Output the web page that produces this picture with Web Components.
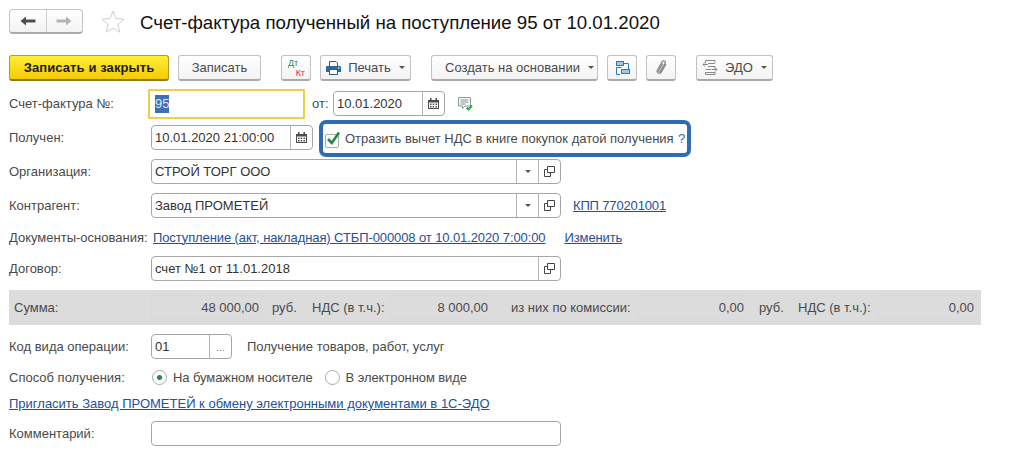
<!DOCTYPE html>
<html lang="ru"><head><meta charset="utf-8"><title>Счет-фактура</title>
<style>
html,body{margin:0;background:#fff}
body{width:1024px;height:474px;overflow:hidden;font:13px "Liberation Sans",Arial,sans-serif;color:#4a4a4a}
</style></head><body>
<doc-page>
  <title-bar slot="head" title-text="Счет-фактура полученный на поступление 95 от 10.01.2020"></title-bar>
  <tool-bar slot="head">
    <tool-btn primary w="160">Записать и закрыть</tool-btn>
    <tool-btn w="83" style="margin-left:9px">Записать</tool-btn>
    <tool-btn w="30" style="margin-left:20px"><dt-kt></dt-kt></tool-btn>
    <tool-btn w="91" style="margin-left:9px" icon="print" menu>Печать</tool-btn>
    <tool-btn w="167" style="margin-left:20px" pad="10" menu>Создать на основании</tool-btn>
    <tool-btn w="30" style="margin-left:9px" icon="struct"></tool-btn>
    <tool-btn w="30" style="margin-left:9px" icon="clip"></tool-btn>
    <tool-btn w="77" style="margin-left:20px" icon="edo" menu>ЭДО</tool-btn>
  </tool-bar>
  <form-row label="Счет-фактура №:">
    <text-field w="157" focused value="95" style="margin-left:-3px"></text-field>
    <plain-text w="28" pad="7">от:</plain-text>
    <text-field w="112" value="10.01.2020" btns="cal"></text-field>
    <note-icon style="margin-left:13px"></note-icon>
  </form-row>
  <form-row label="Получен:">
    <text-field w="162" value="10.01.2020 21:00:00" btns="cal"></text-field>
    <check-opt style="margin-left:6px">Отразить вычет НДС в книге покупок датой получения</check-opt>
  </form-row>
  <form-row label="Организация:">
    <text-field w="410" value="СТРОЙ ТОРГ ООО" btns="drop open"></text-field>
  </form-row>
  <form-row label="Контрагент:">
    <text-field w="410" value="Завод ПРОМЕТЕЙ" btns="drop open"></text-field>
    <link-text style="margin-left:12px;letter-spacing:-.15px">КПП 770201001</link-text>
  </form-row>
  <form-row label="Документы-основания:" h="20">
    <link-text style="margin-left:2px;letter-spacing:-.1px">Поступление (акт, накладная) СТБП-000008 от 10.01.2020 7:00:00</link-text>
    <link-text style="margin-left:19px;letter-spacing:-.1px">Изменить</link-text>
  </form-row>
  <form-row label="Договор:">
    <text-field w="410" value="счет №1 от 11.01.2018" btns="open"></text-field>
  </form-row>
  <total-band>
    <plain-text w="142" pad="5">Сумма:</plain-text>
    <amount-box w="111">48 000,00</amount-box>
    <plain-text w="50" pad="10">руб.</plain-text>
    <plain-text w="78">НДС (в т.ч.):</plain-text>
    <amount-box w="101">8 000,00</amount-box>
    <plain-text w="146" pad="20">из них по комиссии:</plain-text>
    <amount-box w="110">0,00</amount-box>
    <plain-text w="51" pad="12">руб.</plain-text>
    <plain-text w="79">НДС (в т.ч.):</plain-text>
    <amount-box w="100">0,00</amount-box>
  </total-band>
  <form-row label="Код вида операции:">
    <text-field w="81" value="01" btns="dots"></text-field>
    <plain-text pad="15">Получение товаров, работ, услуг</plain-text>
  </form-row>
  <form-row label="Способ получения:" h="18">
    <radio-opt checked>На бумажном носителе</radio-opt>
    <radio-opt style="margin-left:11px">В электронном виде</radio-opt>
  </form-row>
  <form-row h="17" nolabel>
    <link-text>Пригласить Завод ПРОМЕТЕЙ к обмену электронными документами в 1С-ЭДО</link-text>
  </form-row>
  <form-row label="Комментарий:">
    <text-field w="410" value=""></text-field>
  </form-row>
</doc-page>
<script>
const FONT='"Liberation Sans",Arial,sans-serif';
const ICONS={
 print:'<svg width="15" height="14" viewBox="0 0 15 14"><path d="M3.500.5h6.500l1.500 1.500v3.500h-8z" fill="#fff" stroke="#2a5f8c"/><path d="M1 5h13a1 1 0 0 1 1 1v5h-15V6a1 1 0 0 1 1-1z" fill="#2f6a98"/><rect x="3.500" y="8.500" width="8" height="5" fill="#fff" stroke="#2a5f8c"/><rect x="12" y="6.300" width="1.600" height="1.400" fill="#cfe2f0"/></svg>',
 struct:'<svg width="15" height="16" viewBox="0 0 15 16" fill="none" stroke="#2b7ab5"><rect x="1.500" y="1.500" width="7" height="4" fill="#9fcbe8"/><rect x="6.500" y="9.500" width="8" height="4" fill="#9fcbe8"/><path d="M8.500 3.500h5V9M6.500 7.500h-5v7H5"/></svg>',
 clip:'<svg width="15" height="15" viewBox="0 0 16 16" fill="none" stroke="#8a8a8a" stroke-width="1.400"><g transform="rotate(-14 8 8)"><path d="M13.500 5.500 6.800 12.600c-1.100 1.200-2.700 1.200-3.600.3s-.9-2.400.2-3.600l6.700-7c.8-.8 1.900-.8 2.600-.1s.7 1.800-.1 2.600L6 11.600c-.5.500-1.100.5-1.500.2s-.4-1 .1-1.500l5.600-5.900"/></g></svg>',
 edo:'<svg width="16" height="15" viewBox="0 0 16 15" fill="none" stroke="#8a8a8a"><path d="M3.500.5h9.500v2M3.500.5v2.500M6 3.500h7M6 6.500h7M3.500 9.500h6M3.500 12.500h9.500M3.500 12v2.500h9.500V12M13 6.500v2"/><path d="M6 4.500H1M3 2.500 1 4.500l2 2M10 9.500h5M13 7.500l2 2-2 2"/></svg>'
};
function def(name,css,build){
 customElements.define(name,class extends HTMLElement{
  connectedCallback(){
   if(this.shadowRoot)return;
   const r=this.attachShadow({mode:'open'});
   r.innerHTML='<style>'+css+'</style>'+build(this);
  }
 });
}
const a=(e,n,d='')=>e.hasAttribute(n)?e.getAttribute(n):d;
const W=e=>{if(e.hasAttribute('w'))e.style.width=a(e,'w')+'px';};

def('doc-page',`:host{display:block;font:13px ${FONT};color:#4a4a4a;box-sizing:border-box;height:474px;padding:9px 0 0 9px}
 .head{display:block;height:82px}
 .body{display:flex;flex-direction:column;gap:9px;width:972px}
 `,()=>'<div class="head"><slot name="head"></slot></div><div class="body"><slot></slot></div>');

def('title-bar',`:host{display:flex;align-items:center;height:25px}
 .nav{display:flex;width:74px;height:25px;box-sizing:border-box;border:1px solid #c4c4c4;border-bottom:2px solid #aaa;border-radius:4px;background:linear-gradient(#fff,#f2f2f2)}
 .nav span{flex:1;display:flex;align-items:center;justify-content:center}
 .nav span+span{border-left:1px solid #d0d0d0}
 .star{margin-left:18px;display:flex}
 h1{margin:2px 0 0 15px;font:400 18.67px ${FONT};color:#111;white-space:nowrap;letter-spacing:0}`,
 e=>`<div class="nav"><span><svg width="16" height="10" viewBox="0 0 16 10"><path d="M0.500 5 6 .5V3.500H15.500V6.500H6V9.500z" fill="#4e4e4e"/></svg></span><span><svg width="16" height="10" viewBox="0 0 16 10"><path d="M15.500 5 10 .5V3.500H.5V6.500H10V9.500z" fill="#b4b4b4"/></svg></span></div>
 <span class="star"><svg width="24" height="23" viewBox="0 0 24 23"><path d="M12 1l3 7.600 8 .6-6.100 5.200 1.900 7.800L12 18l-6.800 4.200 1.900-7.800L1 9.200l8-.6z" fill="#fff" stroke="#cfcfcf"/></svg></span><h1>${a(e,'title-text')}</h1>`);

def('tool-bar',`:host{display:flex;align-items:center;height:26px;margin-top:21px}`,()=>'<slot></slot>');

def('tool-btn',`:host{display:inline-flex;height:26px;flex:none}
 .b{flex:1;display:flex;align-items:center;justify-content:center;gap:7px;box-sizing:border-box;border:1px solid #c2c2c2;border-bottom:2px solid #a9a9a9;border-radius:3px;background:linear-gradient(#fff,#f3f3f3);color:#4a4a4a;white-space:nowrap;font:13px ${FONT}}
 :host([primary]) .b{background:linear-gradient(#ffee3a,#f6cb00);border-color:#b39a2a #b39a2a #8d7a20;color:#1d1d1d;font-weight:700;letter-spacing:.1px}
 .m{width:0;height:0;border:3px solid transparent;border-top:3px solid #555;border-bottom:0;margin-left:1px}
 svg{display:block}`,
 e=>{W(e);const p=a(e,'pad');return `<div class="b" part="b"${p?` style="padding-left:${p}px"`:''}>${ICONS[a(e,'icon')]||''}<slot></slot>${e.hasAttribute('menu')?'<i class="m"></i>':''}</div>`;});
 
def('dt-kt',`:host{display:block;width:16px;height:20px;position:relative;font:400 9px ${FONT}}
 span{line-height:10px;height:10px;overflow:hidden;display:block;position:absolute}
 .d{left:0;top:0;color:#23904f}.k{right:-1px;top:10px;color:#d8303f}`,
 ()=>'<span class="d">Дт</span><span class="k">Кт</span>');

def('form-row',`:host{display:flex;align-items:center;height:25px;flex:none}
 .l{width:142px;flex:none;white-space:nowrap;color:#4a4a4a}`,
 e=>{ if(e.hasAttribute('h'))e.style.height=a(e,'h')+'px';
   return (e.hasAttribute('nolabel')?'':`<span class="l">${a(e,'label')}</span>`)+'<slot></slot>';});

def('text-field',`:host{display:flex;flex:none;height:25px;box-sizing:border-box;border:1px solid #a6a6a6;border-radius:4px;background:#fff;color:#333;font:13px ${FONT}}
 :host([focused]){height:30px;border:2px solid #f1cf43;border-radius:1px}
 .v{flex:1;min-width:0;padding-left:3px;display:flex;align-items:center;white-space:nowrap}
 :host([focused]) .v{padding-left:5px}
 :host([focused]) .v span{background:#3f6fb5;color:#dfe7f5;line-height:18px}
 .s{flex:none;width:21px;border-left:1px solid #b4b4b4;display:flex;align-items:center;justify-content:center;color:#777}
 .c{width:20px}`,
 e=>{W(e);const ic={
   cal:'<svg width="11" height="11" viewBox="0 0 11 11"><path d="M0 2h11v9H0z" fill="#4c4c4c"/><path d="M2 0h1.500v3H2zM7.500 0H9v3H7.500z" fill="#4c4c4c"/><path d="M1 4.500h9v5.500H1z" fill="#fff"/><path d="M2 5.500h1.500V7H2zM4.700 5.500h1.500V7H4.700zM7.500 5.500H9V7H7.500zM2 8h1.500v1.500H2zM4.700 8h1.500v1.500H4.700zM7.500 8H9v1.500H7.500z" fill="#4c4c4c"/></svg>',
   drop:'<svg width="6" height="3" viewBox="0 0 6 3"><path d="M0 0h6L3 3z" fill="#555"/></svg>',
   open:'<svg width="11" height="11" viewBox="0 0 11 11" fill="none" stroke="#444"><path d="M3.500 .5h7v6h-7z"/><path d="M3.500 3.500H.5v7h6V6.500"/></svg>',
   dots:'<span style="font-size:10px;line-height:10px;margin-top:2px">...</span>'};
  const v=a(e,'value');
  return `<div class="v">${v?`<span>${v}</span>`:''}</div>`+a(e,'btns').split(' ').filter(Boolean).map(b=>`<div class="s">${ic[b]}</div>`).join('');});

def('plain-text',`:host{display:block;flex:none;box-sizing:border-box;white-space:nowrap;color:#4a4a4a}`,
 e=>{W(e); if(e.hasAttribute('pad'))e.style.paddingLeft=a(e,'pad')+'px'; return '<slot></slot>';});

def('link-text',`:host{display:inline-block;flex:none;color:#234f9b;text-decoration:underline;white-space:nowrap}`,()=>'<slot></slot>');

def('note-icon',`:host{display:block;flex:none;width:15px;height:14px}`,
 ()=>'<svg width="15" height="14" viewBox="0 0 15 14"><path d="M.5.5h12v8.500H7L4.500 11.500V9H.5z" fill="#f4f7f4" stroke="#8d9aa0"/><path d="M2.500 3h8M2.500 5h8M2.500 7h5" stroke="#8d9aa0"/><path d="M8.500 10.500l2 2 3.500-4" fill="none" stroke="#35a84f" stroke-width="2"/></svg>');

def('check-opt',`:host{display:flex;align-items:center;flex:none;box-sizing:border-box;width:372px;height:37px;margin-top:2px;border:4px solid #2f6db0;border-radius:7px;padding-left:2px;color:#4a4a4a;position:relative;white-space:nowrap}
 .box{width:14px;height:14px;box-sizing:border-box;border:1px solid #a9a9a9;border-radius:2px;background:#fff;position:relative;flex:none;margin-top:4px}
 svg{position:absolute;left:0;top:-5px}
 .t{margin-left:6px;width:333px}
 .q{color:#2a6fa8;font-size:13px;}`,
 ()=>'<span class="box"><svg width="15" height="16" viewBox="0 0 15 16"><path d="M2 9l3.800 4L13 2.500" fill="none" stroke="#1f8a46" stroke-width="2.600"/></svg></span><span class="t"><slot></slot></span><span class="q">?</span>');

def('total-band',`:host{display:flex;align-items:center;height:35px;flex:none;background:#dcdcdc;color:#4a4a4a;width:972px}`,()=>'<slot></slot>');

def('amount-box',`:host{display:block;flex:none;box-sizing:border-box;height:25px;line-height:24px;text-align:right;padding-right:2px;border:1px solid #d9d9d9;border-radius:2px;color:#4a4a4a;white-space:nowrap}`,
 e=>{W(e);return '<slot></slot>';});

def('radio-opt',`:host{display:inline-flex;align-items:center;flex:none;white-space:nowrap;color:#4a4a4a;letter-spacing:-.08px}
 .r{width:15px;height:15px;box-sizing:border-box;border:1px solid #a9a9a9;border-radius:50%;background:#fff;display:flex;align-items:center;justify-content:center;margin-right:6px;margin-left:1px}
 .d{width:5px;height:5px;border-radius:50%;background:#1e8a4b}`,
 e=>`<span class="r">${e.hasAttribute('checked')?'<span class="d"></span>':''}</span><slot></slot>`);
</script>
</body></html>
